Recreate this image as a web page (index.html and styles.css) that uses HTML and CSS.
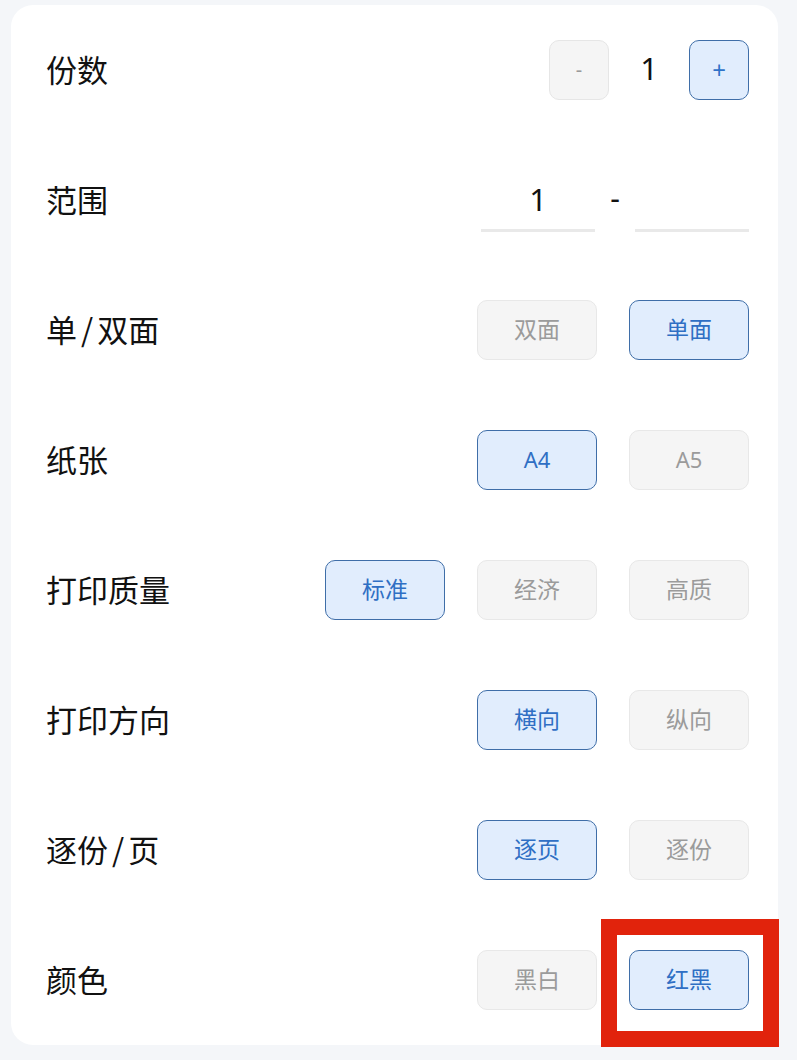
FILE: index.html
```html
<!DOCTYPE html>
<html lang="zh">

<head>
    <meta charset="utf-8">
    <link rel="stylesheet" href="styles.css">
    <title>打印设置</title>
</head>

<body>
    <div class="card">
        <div class="row">
            <span class="label">份数</span>
            <div class="stepper">
                <button class="step">-</button>
                <span class="step-value">1</span>
                <button class="step step-plus">+</button>
            </div>
        </div>
        <div class="row">
            <span class="label">范围</span>
            <div class="range">
                <span class="range-input">1</span>
                <span class="range-dash">-</span>
                <span class="range-input"></span>
            </div>
        </div>
        <div class="row">
            <span class="label">单<span class="slash">/</span>双面</span>
            <div class="options">
                <button class="opt">双面</button>
                <button class="opt active">单面</button>
            </div>
        </div>
        <div class="row">
            <span class="label">纸张</span>
            <div class="options">
                <button class="opt active latin">A4</button>
                <button class="opt latin">A5</button>
            </div>
        </div>
        <div class="row">
            <span class="label">打印质量</span>
            <div class="options">
                <button class="opt active">标准</button>
                <button class="opt">经济</button>
                <button class="opt">高质</button>
            </div>
        </div>
        <div class="row">
            <span class="label">打印方向</span>
            <div class="options">
                <button class="opt active">横向</button>
                <button class="opt">纵向</button>
            </div>
        </div>
        <div class="row">
            <span class="label">逐份<span class="slash">/</span>页</span>
            <div class="options">
                <button class="opt active">逐页</button>
                <button class="opt">逐份</button>
            </div>
        </div>
        <div class="row">
            <span class="label">颜色</span>
            <div class="options">
                <button class="opt">黑白</button>
                <button class="opt active">红黑</button>
            </div>
        </div>
    </div>
    <div class="highlight"></div>
</body>

</html>
```

FILE: styles.css
```css
* {
    box-sizing: border-box;
    margin: 0;
    padding: 0;
}

body {
    background: #f4f6f9;
    font-family: "Noto Sans CJK SC", "Noto Sans", sans-serif;
    padding: 5px 19px 15px 11px;
    position: relative;
}

.card {
    background: #fff;
    border-radius: 22px;
    padding: 0 29px 0 35px;
}

.row {
    height: 130px;
    display: flex;
    align-items: center;
    justify-content: space-between;
}

.label {
    font-size: 31px;
    line-height: 1;
    color: #111;
    margin-top: -3px;
}

.slash {
    padding: 0 4px;
}

.stepper {
    display: flex;
    align-items: center;
}

.step {
    width: 60px;
    height: 60px;
    border-radius: 10px;
    border: 1px solid #e6e6e6;
    background: #f5f5f5;
    color: #9a9a9a;
    font-family: "Noto Sans", sans-serif;
    font-size: 20px;
    line-height: 1;
}

.step-plus {
    background: #e1edfd;
    border-color: #3f6ea8;
    color: #2f72c8;
    font-size: 24px;
}

.step-value {
    width: 80px;
    text-align: center;
    font-family: "Noto Sans", sans-serif;
    font-size: 31px;
    line-height: 1;
    color: #111;
    margin-top: -4px;
}

.range {
    display: flex;
    align-items: center;
}

.range-input {
    width: 114px;
    height: 62px;
    border-bottom: 3px solid #e9e9e9;
    text-align: center;
    font-family: "Noto Sans", sans-serif;
    font-size: 31px;
    line-height: 58px;
    color: #111;
    margin-top: 2px;
}

.range-dash {
    width: 40px;
    text-align: center;
    font-family: "Noto Sans", sans-serif;
    font-size: 30px;
    line-height: 1;
    color: #111;
    margin-top: -4px;
}

.options {
    display: flex;
    gap: 32px;
}

.opt {
    width: 120px;
    height: 60px;
    border-radius: 10px;
    border: 1px solid #e8e8e8;
    background: #f5f5f5;
    color: #9b9b9b;
    font-family: "Noto Sans CJK SC", "Noto Sans", sans-serif;
    font-size: 23px;
    line-height: 1;
    padding-bottom: 3px;
}

.opt.latin {
    font-family: "Noto Sans", sans-serif;
    font-size: 22px;
}

.opt.active {
    background: #e1edfd;
    border-color: #3f6ea8;
    color: #2f6fc4;
}

.highlight {
    position: absolute;
    left: 601px;
    top: 919px;
    width: 178px;
    height: 128px;
    border: 16px solid #e1230c;
}
```
